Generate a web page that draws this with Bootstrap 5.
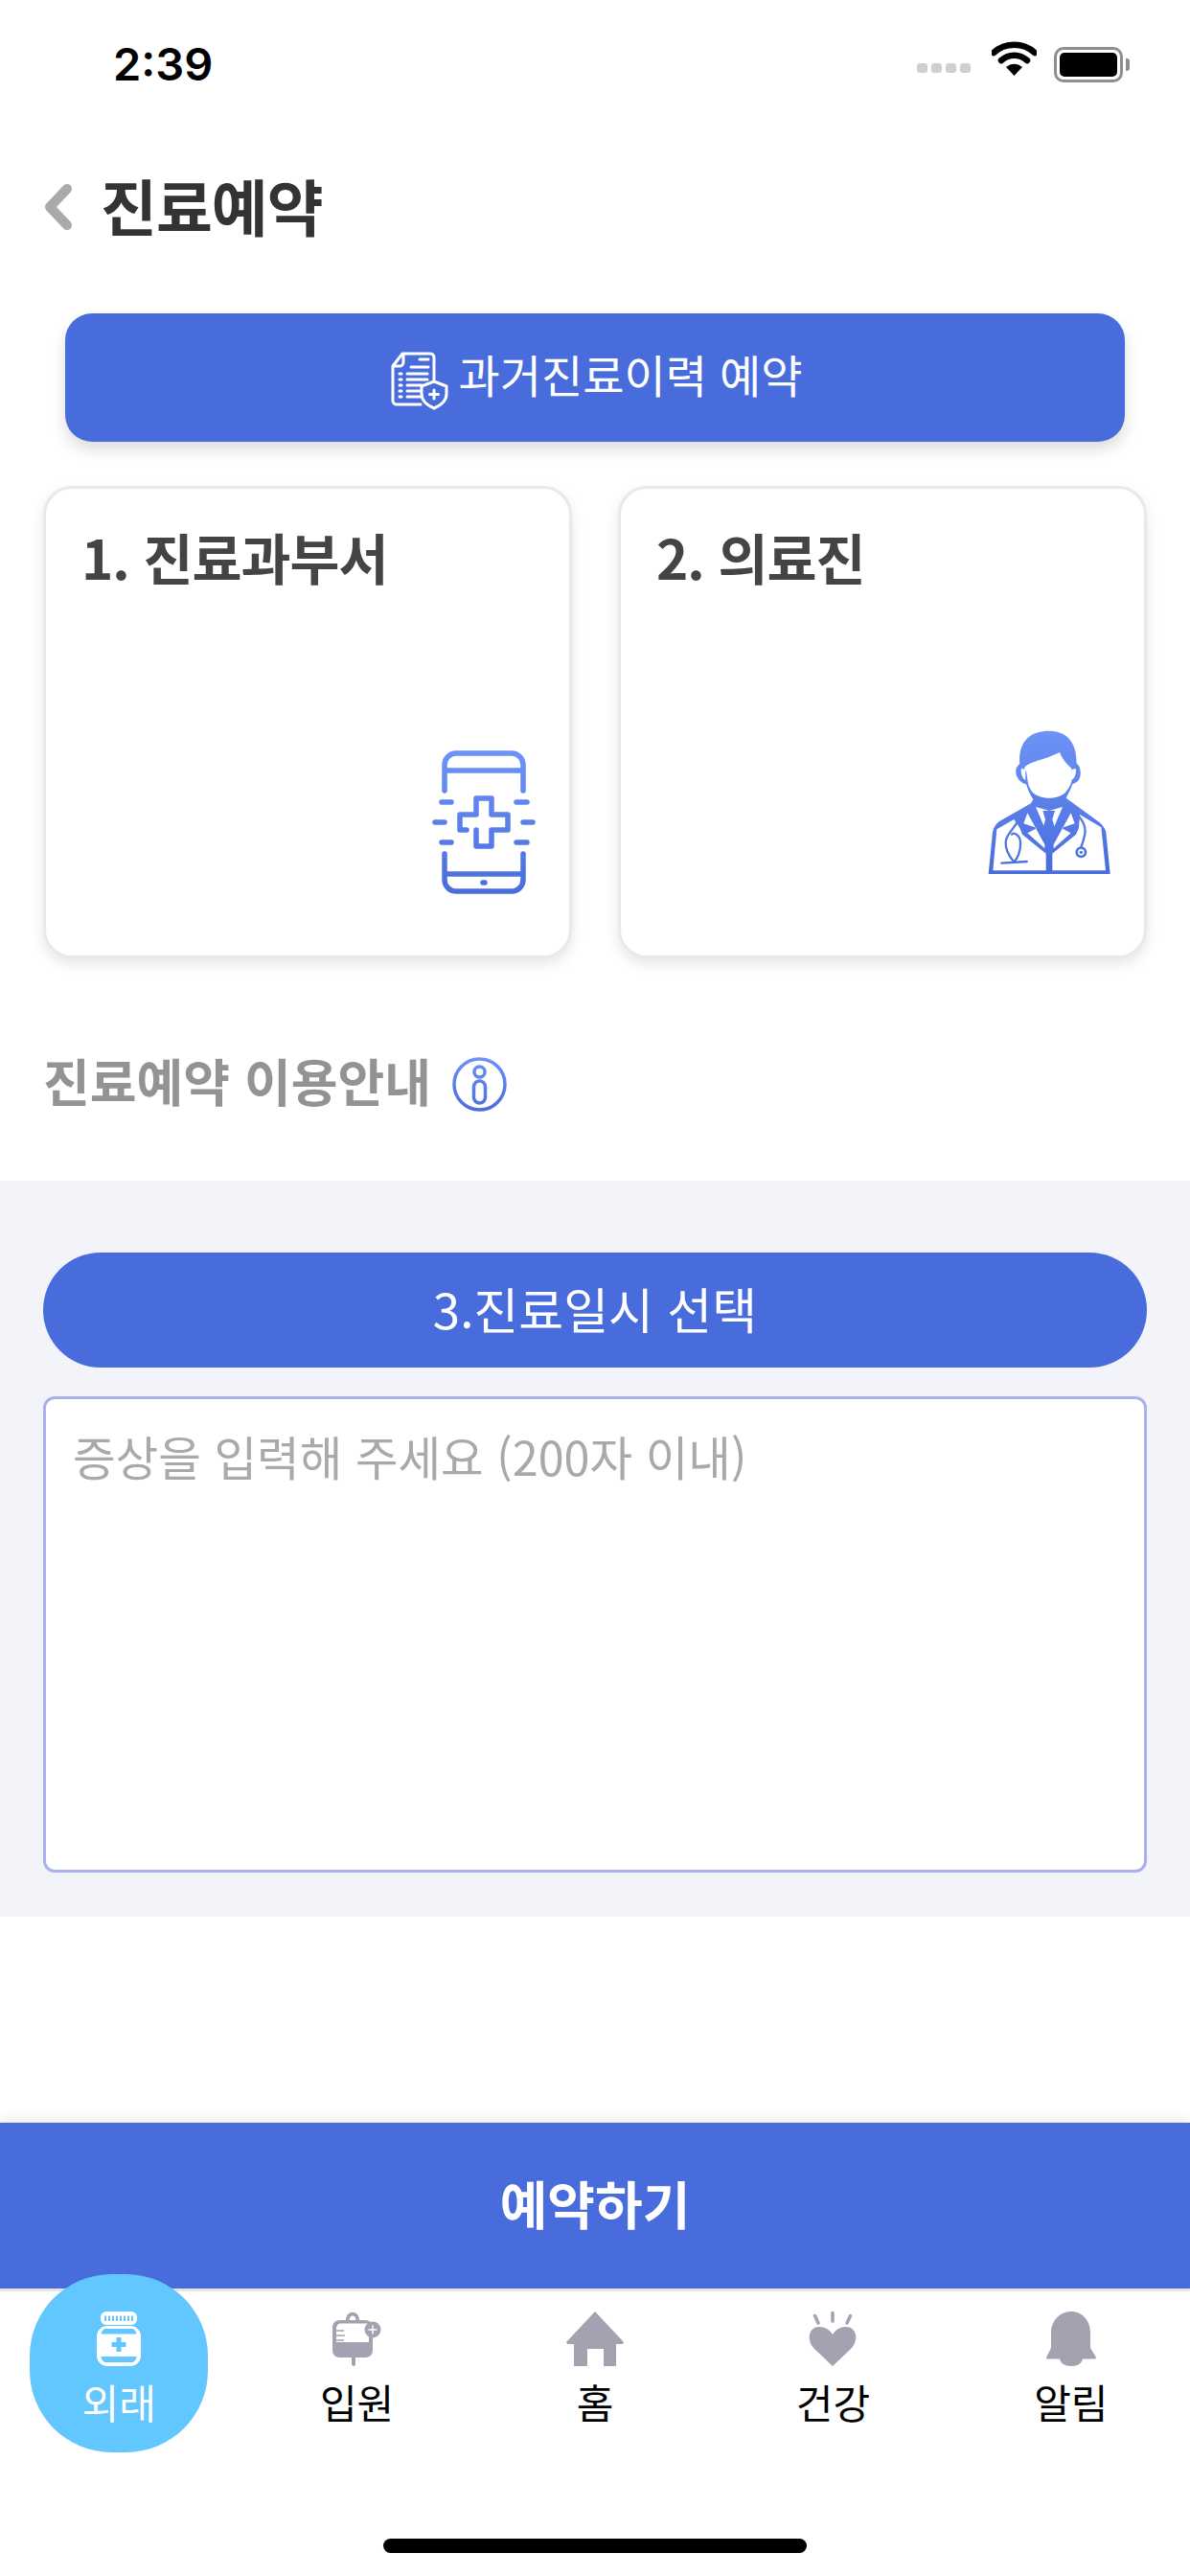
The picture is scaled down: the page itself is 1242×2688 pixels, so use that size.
<!DOCTYPE html>
<html lang="ko">
<head>
    <meta charset="UTF-8">
    <meta name="viewport" content="width=device-width, initial-scale=1">
    <title>진료예약</title>
    <link href="https://cdn.jsdelivr.net/npm/bootstrap@5.3.0/dist/css/bootstrap.min.css" rel="stylesheet">
    <script src="https://cdn.jsdelivr.net/npm/bootstrap@5.3.0/dist/js/bootstrap.bundle.min.js" defer></script>
    <style>
        body { font-family: "Noto Sans CJK KR", "Noto Sans", sans-serif; background: #fff; }
        .app-page { width: 1242px; height: 2688px; overflow: hidden; }
        .status-row { height: 135px; padding: 39px 70px 0 118px; }
        .status-time { font-family: "Inter", "Liberation Sans", sans-serif; font-size: 47px; font-weight: 600; line-height: 56px; color: #000; }
        .signal-dots { gap: 4px; margin: 27px 22px 0 0; }
        .signal-dots i { width: 11px; height: 10px; border-radius: 3px; background: #cfcfcf; display: block; }
        .battery-box { width: 72px; height: 37px; border: 3px solid #8e8e8e; border-radius: 10px; padding: 3px; margin-left: 18px; margin-top: 10px; position: relative; }
        .battery-box::before { content: ""; display: block; height: 100%; background: #000; border-radius: 5px; }
        .battery-box::after { content: ""; position: absolute; right: -10px; top: 9px; width: 4px; height: 13px; background: #8e8e8e; border-radius: 0 3px 3px 0; }
        .title-row { height: 192px; padding-left: 45px; gap: 28px; padding-bottom: 36px; }
        .title-row svg { margin-top: 6px; }
        .page-title { font-size: 64px; font-weight: 700; color: #333; margin: 0; letter-spacing: -1px; line-height: 1.2; }
        .history-btn { display: flex; width: 1106px; height: 134px; margin: 0 0 46px 68px; padding-bottom: 14px; background: #496cdd; border: 0; border-radius: 28px; color: #fff; font-size: 47px; align-items: center; justify-content: center; gap: 10px; box-shadow: 0 8px 16px rgba(0,0,0,.14); }
        .history-btn svg { margin-left: 4px; margin-top: 14px; }
        .step-row { padding: 0 45px; gap: 48px; }
        .step-card { flex: 1 1 0; height: 493px; border: 3px solid #e9e9e9; border-radius: 30px; box-shadow: 0 6px 14px rgba(0,0,0,.1); padding: 35px 38px 0 37px; }
        .step-title { font-size: 56.500px; font-weight: 700; color: #444; margin: 0; line-height: 1.25; letter-spacing: -1px; }
        .step-icon { position: absolute; }
        .guide-row { height: 232px; padding: 0 0 0 45px; gap: 22px; padding-bottom: 72px; align-items: flex-end; }
        .guide-text { font-size: 53px; font-weight: 700; color: #939393; line-height: 1.2; }
        .gray-section { height: 768px; background: #f2f4f9; padding: 75px 45px 0; }
        .date-pill { display: block; width: 100%; height: 120px; padding-bottom: 10px; background: #496cdd; border: 0; border-radius: 60px; color: #fff; font-size: 51px; }
        .memo-box { display: block; width: 100%; height: 497px; margin-top: 30px; border: 3px solid #aab0ee; border-radius: 12px; padding: 23px 28px; font-size: 48.500px; resize: none; }
        .memo-box::placeholder { color: #a9a9a9; opacity: 1; }
        .reserve-btn { display: block; width: 100%; height: 173px; margin-top: 215px; padding-bottom: 12px; background: #496cdd; border: 0; border-radius: 0; color: #fff; font-size: 54px; font-weight: 700; box-shadow: 0 -4px 12px rgba(0,0,0,.08); }
        .tab-row { height: 299px; border-top: 3px solid #e6e6e6; flex-wrap: nowrap; }
        .tab-cell { flex: 1 1 0; padding-top: 21px; position: relative; color: #000; font-size: 42px; line-height: 1; gap: 16px; }
        .tab-cell svg, .tab-cell span { position: relative; }
        .tab-cell.is-active { color: #fff; }
        .tab-bubble { position: absolute; left: 31px; top: -18px; width: 186px; height: 186px; background: #62c6ff; border-radius: 46%; }
        .home-bar { position: absolute; left: 400px; top: 2649px; width: 442px; height: 15px; background: #000; border-radius: 8px; }
    </style>
</head>
<body>
<div class="app-page position-relative">
    <div class="status-row d-flex align-items-start">
        <div class="status-time me-auto">2:39</div>
        <div class="signal-dots d-flex"><i></i><i></i><i></i><i></i></div>
        <svg width="47" height="37" viewBox="0 0 47 37" class="mt-1">
            <path d="M2 12C14 1 33 1 45 12M10 20C18 13 29 13 37 20" fill="none" stroke="#000" stroke-width="6.5" stroke-linecap="round"/>
            <path d="M23.5 36L15 27C20 22.500 27 22.500 32 27Z" fill="#000"/>
        </svg>
        <div class="battery-box"></div>
    </div>

    <div class="title-row d-flex align-items-center">
        <svg width="32" height="50" viewBox="0 0 32 50"><path d="M25 6L7 25L25 44" fill="none" stroke="#aaa" stroke-width="10" stroke-linecap="round" stroke-linejoin="round"/></svg>
        <h1 class="page-title">진료예약</h1>
    </div>

    <button type="button" class="btn history-btn">
        <svg width="60" height="62" viewBox="0 0 60 62" fill="none" stroke="#fff" stroke-width="3" stroke-linecap="round" stroke-linejoin="round">
            <path d="M2 16L12 3H41a4 4 0 0 1 4 4V30M2 16V52a4 4 0 0 0 4 4H31M2 16H9a4 4 0 0 0 4-4V3"/>
            <path d="M30 9H39M21 17H39M17 24H38M9 24H11M17 30H38M9 30H11M17 36H32M9 36H11M17 42H30M9 42H11M17 48H30M9 48H11"/>
            <path d="M45 32L58 37V45C58 52 52 57 45 60C38 57 32 52 32 45V37Z"/>
            <path d="M45 41V50M40.500 45.500H49.500"/>
        </svg>
        <span>과거진료이력 예약</span>
    </button>

    <div class="step-row d-flex">
        <div class="card step-card position-relative">
            <h2 class="step-title">1. 진료과부서</h2>
            <svg class="step-icon" style="right:35px;bottom:64px" width="108" height="150" viewBox="51 43 108 150" fill="none" stroke="url(#phoneFade)" stroke-width="5.500" stroke-linecap="round" stroke-linejoin="round">
                <defs><linearGradient id="phoneFade" gradientUnits="userSpaceOnUse" x1="0" y1="43" x2="0" y2="193"><stop offset="0" stop-color="#6d93f7"/><stop offset="1" stop-color="#496cdd"/></linearGradient></defs>
                <path d="M64 85V58a12 12 0 0 1 12-12H134a12 12 0 0 1 12 12V85M64 64H146"/>
                <path d="M64 151V178a12 12 0 0 0 12 12H134a12 12 0 0 0 12-12V151M64 172H146"/>
                <path d="M104 181H106M61 97H71M54 118H64M61 139H71M139 97H150M146 118H156M139 139H150"/>
                <path d="M87 126H80V110H97V93H113V110H130V126H113V143H97V126"/>
            </svg>
        </div>
        <div class="card step-card position-relative">
            <h2 class="step-title">2. 의료진</h2>
            <svg class="step-icon" style="right:35px;bottom:85px" width="128" height="150" viewBox="90 66 384 450">
                <defs><linearGradient id="docFade" gradientUnits="userSpaceOnUse" x1="0" y1="66" x2="0" y2="516"><stop offset="0" stop-color="#6d93f7"/><stop offset="1" stop-color="#496cdd"/></linearGradient></defs>
                <path fill="url(#docFade)" d="M190 170C185 110 215 68 280 68C340 68 368 105 368 170C382 178 385 210 372 225C365 232 358 232 355 235C350 250 342 265 335 278L440 355C452 366 458 375 460 385L473 516H92L105 385C108 370 115 360 125 352L225 295L232 282C222 270 215 250 210 235C195 232 175 215 178 190C180 178 190 172 190 170Z"/>
                <path fill="#fff" d="M205 183C215 165 265 160 315 135C325 160 340 175 352 185C358 220 350 240 335 258C315 285 250 285 228 258C215 240 215 225 212 205C212 190 200 185 205 183Z"/>
                <path fill="#fff" d="M195 185C192 195 195 215 208 222L208 190ZM365 185C368 195 365 215 352 222L352 190Z"/>
                <path fill="#fff" d="M172 345L118 376L106 505H272V452L198 392L190 372ZM378 330L445 370L459 505H292V452L366 392L375 372Z"/>
                <path fill="#fff" d="M240 306L282 318L324 306L282 405Z"/>
                <path fill="#fff" d="M214 325L268 424V436L214 388L244 372L202 358Z"/>
                <path fill="#fff" d="M350 325L296 424V436L350 388L320 372L362 358Z"/>
                <path fill="url(#docFade)" d="M262 318H300L292 345L304 385L282 412L260 385L270 345Z"/>
                <g fill="none" stroke="url(#docFade)" stroke-width="7" stroke-linecap="round">
                    <path d="M186 340C186 365 148 385 146 415C144 445 165 470 172 478C180 470 195 445 192 415C190 392 170 385 165 392"/>
                    <path d="M133 482L212 477"/>
                    <path d="M375 335C405 370 395 395 382 432"/>
                </g>
                <circle cx="382" cy="448" r="14" fill="#fff" stroke="url(#docFade)" stroke-width="8"/>
                <circle cx="382" cy="448" r="5" fill="url(#docFade)"/>
            </svg>
        </div>
    </div>

    <div class="guide-row d-flex">
        <span class="guide-text">진료예약 이용안내</span>
        <svg width="57" height="57" viewBox="0 0 57 57" fill="none" stroke="url(#infoFade)" stroke-width="3.500">
            <defs><linearGradient id="infoFade" gradientUnits="userSpaceOnUse" x1="0" y1="0" x2="0" y2="57"><stop offset="0" stop-color="#6d93f7"/><stop offset="1" stop-color="#496cdd"/></linearGradient></defs>
            <circle cx="28.500" cy="28.500" r="26.500"/>
            <circle cx="28.500" cy="15.500" r="5.500"/>
            <rect x="22.500" y="25" width="12" height="23" rx="6"/>
        </svg>
    </div>

    <section class="gray-section">
        <button type="button" class="btn date-pill">3.진료일시 선택</button>
        <textarea class="form-control memo-box" placeholder="증상을 입력해 주세요 (200자 이내)"></textarea>
    </section>

    <button type="button" class="btn reserve-btn">예약하기</button>

    <nav class="nav tab-row">
        <a class="tab-cell is-active d-flex flex-column align-items-center text-decoration-none">
            <div class="tab-bubble"></div>
            <svg width="46" height="57" viewBox="0 0 46 57">
                <rect x="4" y="0" width="38" height="14" rx="6" fill="#fff"/>
                <path d="M9 4.500V10M13 4.500V10M17 4.500V10M21 4.500V10M25 4.500V10M29 4.500V10M33 4.500V10M37 4.500V10" stroke="#62c6ff" stroke-width="2"/>
                <rect x="0" y="15" width="46" height="42" rx="11" fill="#fff"/>
                <path d="M4.500 23.500C5 20 7 18 10 18H36C39 18 41 20 41.500 23.500Z" fill="#62c6ff"/>
                <path d="M4.500 47H41.500C41 51 39 53 36 53H10C7 53 5 51 4.500 47Z" fill="#62c6ff"/>
                <path d="M23 27V42M15.500 34.500H30.500" stroke="#62c6ff" stroke-width="5"/>
            </svg>
            <span>외래</span>
        </a>
        <a class="tab-cell d-flex flex-column align-items-center text-decoration-none">
            <svg width="51" height="57" viewBox="0 0 51 57">
                <path d="M14 9C14 -2 28 -2 28 9H34C39 9 42 12 42 17V40C42 45 39 48 34 48H24V55C24 57.500 20 57.500 20 55V48H8C3 48 0 45 0 40V17C0 12 3 9 8 9Z" fill="#a3a2b0"/>
                <path d="M17.500 9C17.500 3 24.500 3 24.500 9Z" fill="#fff"/>
                <path d="M4 18C4 14.500 6 12.500 9 12.500H38V32H4Z" fill="#fff"/>
                <path d="M4 20H12M4 25H13M4 30H12" stroke="#a3a2b0" stroke-width="1.500"/>
                <circle cx="42" cy="19" r="8.500" fill="#a3a2b0"/>
                <path d="M42 14.500V23.500M37.500 19H46.500" stroke="#fff" stroke-width="1.500"/>
            </svg>
            <span>입원</span>
        </a>
        <a class="tab-cell d-flex flex-column align-items-center text-decoration-none">
            <svg width="62" height="57" viewBox="0 0 62 57">
                <path d="M31 0L61 32L60 34H53V57H40V39H23V57H9V34H2L1 32Z" fill="#a3a2b0"/>
            </svg>
            <span>홈</span>
        </a>
        <a class="tab-cell d-flex flex-column align-items-center text-decoration-none">
            <svg width="50" height="57" viewBox="0 0 50 57">
                <path d="M25 57L6 39C-3 30 0 16 11 16C17 16 22 19 25 24C28 19 33 16 39 16C50 16 53 30 44 39Z" fill="#a3a2b0"/>
                <path d="M25 1.500V10M6.500 4.500L10 12M43.500 4.500L40 12" stroke="#a3a2b0" stroke-width="3.500" stroke-linecap="round"/>
            </svg>
            <span>건강</span>
        </a>
        <a class="tab-cell d-flex flex-column align-items-center text-decoration-none">
            <svg width="52" height="57" viewBox="0 0 52 57">
                <path d="M26 0C37 0 46 9 46 22V38L52 48C52 49 51 49.500 50 49.500H38C37 54 33 57 26 57C19 57 15 54 14 49.500H2C1 49.500 0 49 0 48L5 38V22C5 9 15 0 26 0Z" fill="#a3a2b0"/>
            </svg>
            <span>알림</span>
        </a>
    </nav>
    <div class="home-bar"></div>
</div>
</body>
</html>
